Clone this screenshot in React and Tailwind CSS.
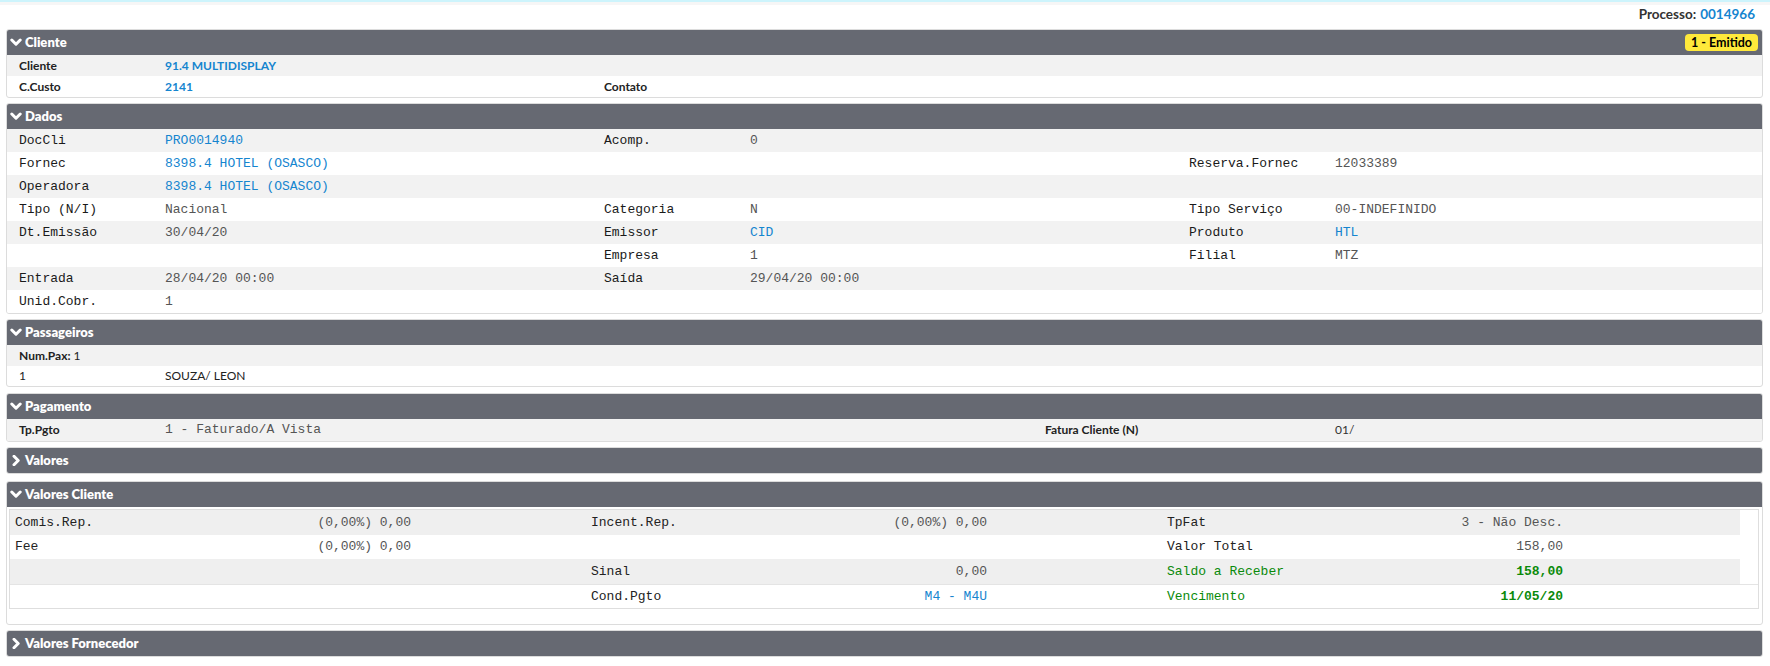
import React from 'react';

const sans = 'font-["Lato","Liberation_Sans",sans-serif]';
const mono = 'font-["Courier_New","Liberation_Mono",monospace]';

const Chevron = ({ open }) => (
  <svg width="12" height="11" viewBox="0 0 12 11" className="shrink-0">
    {open ? (
      <polyline points="1.8,3 6,7.2 10.2,3" fill="none" stroke="white" strokeWidth="3" strokeLinecap="round" strokeLinejoin="round" />
    ) : (
      <polyline points="4,1.3 8.2,5.5 4,9.7" fill="none" stroke="white" strokeWidth="3" strokeLinecap="round" strokeLinejoin="round" />
    )}
  </svg>
);

function Panel({ title, open = true, badge, className = '', children }) {
  return (
    <div className={`border border-[#dcdcdc] rounded-[3px] overflow-hidden bg-white ${className}`}>
      <div className="h-[25px] bg-[#666972] flex items-center pl-[3px] pr-[4px] gap-[3px]">
        <Chevron open={open} />
        <span className={`${sans} text-white font-extrabold text-[13px]`}>{title}</span>
        {badge && (
          <span className={`${sans} ml-auto bg-[#ffe93b] text-black font-bold text-[12.5px] leading-[17px] px-[6px] rounded-[4px]`}>
            {badge}
          </span>
        )}
      </div>
      {children}
    </div>
  );
}

const dadosRows = [
  [['DocCli', 'PRO0014940', 'blue'], ['Acomp.', '0'], null],
  [['Fornec', '8398.4 HOTEL (OSASCO)', 'blue'], null, ['Reserva.Fornec', '12033389']],
  [['Operadora', '8398.4 HOTEL (OSASCO)', 'blue'], null, null],
  [['Tipo (N/I)', 'Nacional'], ['Categoria', 'N'], ['Tipo Serviço', '00-INDEFINIDO']],
  [['Dt.Emissão', '30/04/20'], ['Emissor', 'CID', 'blue'], ['Produto', 'HTL', 'blue']],
  [null, ['Empresa', '1'], ['Filial', 'MTZ']],
  [['Entrada', '28/04/20 00:00'], ['Saída', '29/04/20 00:00'], null],
  [['Unid.Cobr.', '1'], null, null],
];

function DadosCell({ cell }) {
  if (!cell) {
    return (
      <>
        <div />
        <div />
      </>
    );
  }
  const [label, value, tone] = cell;
  return (
    <>
      <div className="pl-3 text-[#1a1a1a]">{label}</div>
      <div className={`pl-3 ${tone === 'blue' ? 'text-[#1585cf]' : 'text-[#555]'}`}>{value}</div>
    </>
  );
}

const valoresRows = [
  {
    bg: 'bg-[#efefef]',
    cells: [
      ['Comis.Rep.', '(0,00%) 0,00'],
      ['Incent.Rep.', '(0,00%) 0,00'],
      ['TpFat', '3 - Não Desc.'],
    ],
  },
  {
    bg: 'bg-white',
    cells: [['Fee', '(0,00%) 0,00'], null, ['Valor Total', '158,00']],
  },
  {
    bg: 'bg-[#efefef]',
    cells: [null, ['Sinal', '0,00'], ['Saldo a Receber', '158,00', 'green']],
  },
];

function Pair({ cell }) {
  if (!cell) return <div className="w-[396px]" />;
  const [label, value, tone] = cell;
  const labelCls = tone === 'green' ? 'text-[#0a8a0a]' : 'text-[#222]';
  const valueCls =
    tone === 'green' ? 'text-[#0a8a0a] font-bold' : tone === 'blue' ? 'text-[#1585cf]' : 'text-[#555]';
  return (
    <div className="w-[396px] flex justify-between">
      <span className={labelCls}>{label}</span>
      <span className={valueCls}>{value}</span>
    </div>
  );
}

export default function App() {
  return (
    <div className="w-[1770px] h-[666px] bg-white overflow-hidden">
      <div className="h-[2px] bg-[#cdf4fc]" />
      <div className="h-[3px] bg-[#f6f6f6]" />
      <div className={`${sans} h-[18px] flex items-center justify-end pr-[15px] text-[13.5px] font-bold`}>
        <span className="text-[#333]">Processo:</span>
        <span className="text-[#1585cf] ml-[4px]">0014966</span>
      </div>

      <div className="ml-[6px] mt-[6px] mr-[7px] flex flex-col gap-[5px]">
        <Panel title="Cliente" badge="1 - Emitido">
          <div className={`${sans} text-[12px] font-bold`}>
            <div className="h-[21px] bg-[#f2f2f2] grid grid-cols-[146px_439px_146px_1fr] items-center">
              <div className="pl-3 text-[#222]">Cliente</div>
              <div className="pl-3 text-[#1585cf]">91.4 MULTIDISPLAY</div>
              <div />
              <div />
            </div>
            <div className="h-[21px] grid grid-cols-[146px_439px_146px_1fr] items-center">
              <div className="pl-3 text-[#222]">C.Custo</div>
              <div className="pl-3 text-[#1585cf]">2141</div>
              <div className="pl-3 text-[#222]">Contato</div>
              <div />
            </div>
          </div>
        </Panel>

        <Panel title="Dados">
          <div className={`${mono} text-[13px]`}>
            {dadosRows.map((row, i) => (
              <div
                key={i}
                className={`h-[23px] grid grid-cols-[146px_439px_146px_439px_146px_1fr] items-center ${
                  i % 2 === 0 ? 'bg-[#f2f2f2]' : 'bg-white'
                }`}
              >
                {row.map((cell, j) => (
                  <DadosCell key={j} cell={cell} />
                ))}
              </div>
            ))}
          </div>
        </Panel>

        <Panel title="Passageiros">
          <div className={`${sans} text-[12px] text-[#222]`}>
            <div className="h-[21px] bg-[#f2f2f2] flex items-center pl-3">
              <span className="font-bold">Num.Pax:</span>
              <span className="ml-[3px]">1</span>
            </div>
            <div className="h-[20px] grid grid-cols-[146px_1fr] items-center">
              <div className="pl-3">1</div>
              <div className="pl-3">SOUZA/ LEON</div>
            </div>
          </div>
        </Panel>

        <Panel title="Pagamento" className="mt-[1px]">
          <div className="h-[22px] bg-[#f2f2f2] grid grid-cols-[146px_880px_290px_1fr] items-center text-[12px]">
            <div className={`${sans} pl-3 font-bold text-[#222]`}>Tp.Pgto</div>
            <div className={`${mono} pl-3 text-[13px] text-[#555]`}>1 - Faturado/A Vista</div>
            <div className={`${sans} pl-3 font-bold text-[#222]`}>Fatura Cliente (N)</div>
            <div className={`${sans} pl-3 text-[#333]`}>01/</div>
          </div>
        </Panel>

        <Panel title="Valores" open={false} />

        <Panel title="Valores Cliente" className="mt-[2px]">
          <div className="pt-[2px] pb-[15px] pl-[2px] pr-[3px]">
            <div className={`${mono} text-[13px] border border-[#dedede]`}>
              <div className="mr-[18px]">
                {valoresRows.map((row, i) => (
                  <div key={i} className={`${row.bg} h-[24.5px] flex items-center pl-[5px]`}>
                    <Pair cell={row.cells[0]} />
                    <div className="w-[180px]" />
                    <Pair cell={row.cells[1]} />
                    <div className="w-[180px]" />
                    <Pair cell={row.cells[2]} />
                  </div>
                ))}
              </div>
              <div className="h-[24.5px] flex items-center pl-[5px] border-t border-[#e4e4e4]">
                <Pair cell={null} />
                <div className="w-[180px]" />
                <Pair cell={['Cond.Pgto', 'M4 - M4U', 'blue']} />
                <div className="w-[180px]" />
                <Pair cell={['Vencimento', '11/05/20', 'green']} />
              </div>
            </div>
          </div>
        </Panel>

        <Panel title="Valores Fornecedor" open={false} />
      </div>
    </div>
  );
}
